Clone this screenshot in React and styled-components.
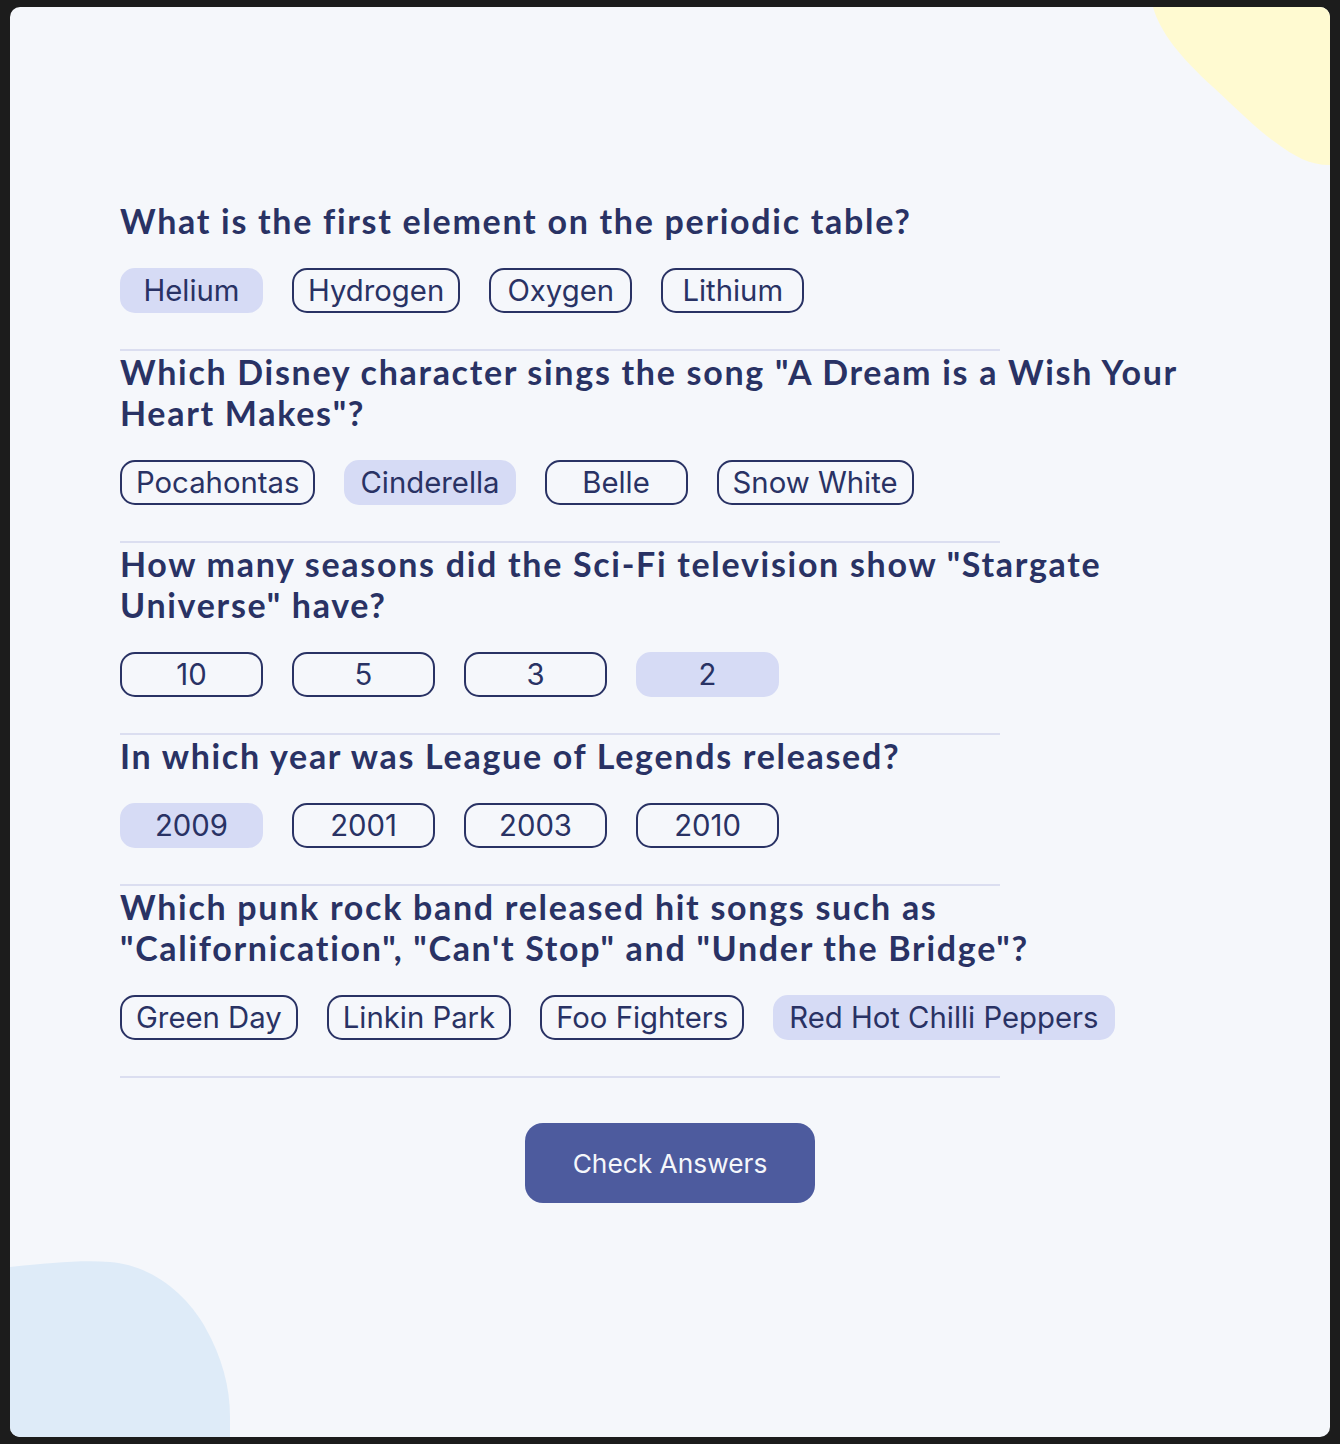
import React from 'react'
import styled, { createGlobalStyle } from 'styled-components'

const GlobalStyle = createGlobalStyle`
  html, body {
    margin: 0;
    padding: 0;
    background: #1c1c1c;
  }
  body {
    padding: 7px 10px;
    box-sizing: border-box;
  }
`

const Card = styled.main`
  position: relative;
  overflow: hidden;
  box-sizing: border-box;
  height: 1430px;
  border-radius: 10px;
  background: #f5f7fb;
  padding: 193px 110px 0;
`

const BlobTop = styled.svg`
  position: absolute;
  top: 0;
  right: 0;
`

const BlobBottom = styled.svg`
  position: absolute;
  left: 0;
  bottom: 0;
`

const Quiz = styled.div`
  position: relative;
  width: 1100px;
  display: flex;
  flex-direction: column;
`

const Block = styled.section`
  display: flex;
  flex-direction: column;
`

const Question = styled.h2`
  margin: 0 0 27px;
  font-family: Lato, "Liberation Sans", sans-serif;
  font-weight: 700;
  font-size: 34px;
  line-height: 41px;
  letter-spacing: 1.7px;
  color: #293264;
`

const Answers = styled.div`
  display: flex;
  gap: 29px;
`

const Answer = styled.button`
  box-sizing: border-box;
  height: 45px;
  min-width: 143px;
  padding: 0 14px;
  display: flex;
  align-items: center;
  justify-content: center;
  border-radius: 15px;
  border: 2px solid ${({ picked }) => (picked ? '#d6dbf5' : '#293264')};
  background: ${({ picked }) => (picked ? '#d6dbf5' : 'transparent')};
  color: #293264;
  font-family: Inter, "Liberation Sans", sans-serif;
  font-size: 29.3px;
  font-weight: 400;
  cursor: pointer;
`

const Divider = styled.hr`
  width: 880px;
  margin: 36px 0 0;
  border: none;
  height: 2px;
  background: #dbdef0;
`

const Footer = styled.div`
  display: flex;
  justify-content: center;
  margin-top: 45px;
`

const CheckButton = styled.button`
  width: 290px;
  height: 80px;
  border: none;
  border-radius: 18px;
  background: #4d5b9e;
  color: #f5f7fb;
  font-family: Inter, "Liberation Sans", sans-serif;
  font-size: 26.3px;
  font-weight: 400;
  cursor: pointer;
`

const questions = [
  {
    text: 'What is the first element on the periodic table?',
    answers: ['Helium', 'Hydrogen', 'Oxygen', 'Lithium'],
    picked: 0,
  },
  {
    text: 'Which Disney character sings the song "A Dream is a Wish Your Heart Makes"?',
    answers: ['Pocahontas', 'Cinderella', 'Belle', 'Snow White'],
    picked: 1,
  },
  {
    text: 'How many seasons did the Sci-Fi television show "Stargate Universe" have?',
    answers: ['10', '5', '3', '2'],
    picked: 3,
  },
  {
    text: 'In which year was League of Legends released?',
    answers: ['2009', '2001', '2003', '2010'],
    picked: 0,
  },
  {
    text: 'Which punk rock band released hit songs such as "Californication", "Can\'t Stop" and "Under the Bridge"?',
    answers: ['Green Day', 'Linkin Park', 'Foo Fighters', 'Red Hot Chilli Peppers'],
    picked: 3,
  },
]

export default function App() {
  const [picks, setPicks] = React.useState(questions.map(q => q.picked))

  const pick = (qi, ai) => {
    setPicks(prev => prev.map((p, i) => (i === qi ? ai : p)))
  }

  return (
    <>
      <GlobalStyle />
      <Card>
        <BlobTop width="180" height="160" viewBox="0 0 180 160">
          <path d="M3 0 C 10 25, 30 50, 63 80 C 90 105, 110 125, 125 135 C 145 150, 160 158, 180 158 L 180 0 Z" fill="#fffad1" />
        </BlobTop>
        <BlobBottom width="222" height="180" viewBox="0 0 222 180">
          <path d="M0 10 C 40 6, 70 3, 100 5 C 140 8, 175 35, 195 70 C 212 100, 220 130, 220 160 L 220 180 L 0 180 Z" fill="#deebf8" />
        </BlobBottom>
        <Quiz>
          {questions.map((q, qi) => (
            <Block key={qi}>
              <Question>{q.text}</Question>
              <Answers>
                {q.answers.map((a, ai) => (
                  <Answer key={a} picked={picks[qi] === ai} onClick={() => pick(qi, ai)}>
                    {a}
                  </Answer>
                ))}
              </Answers>
              <Divider />
            </Block>
          ))}
          <Footer>
            <CheckButton>Check Answers</CheckButton>
          </Footer>
        </Quiz>
      </Card>
    </>
  )
}
